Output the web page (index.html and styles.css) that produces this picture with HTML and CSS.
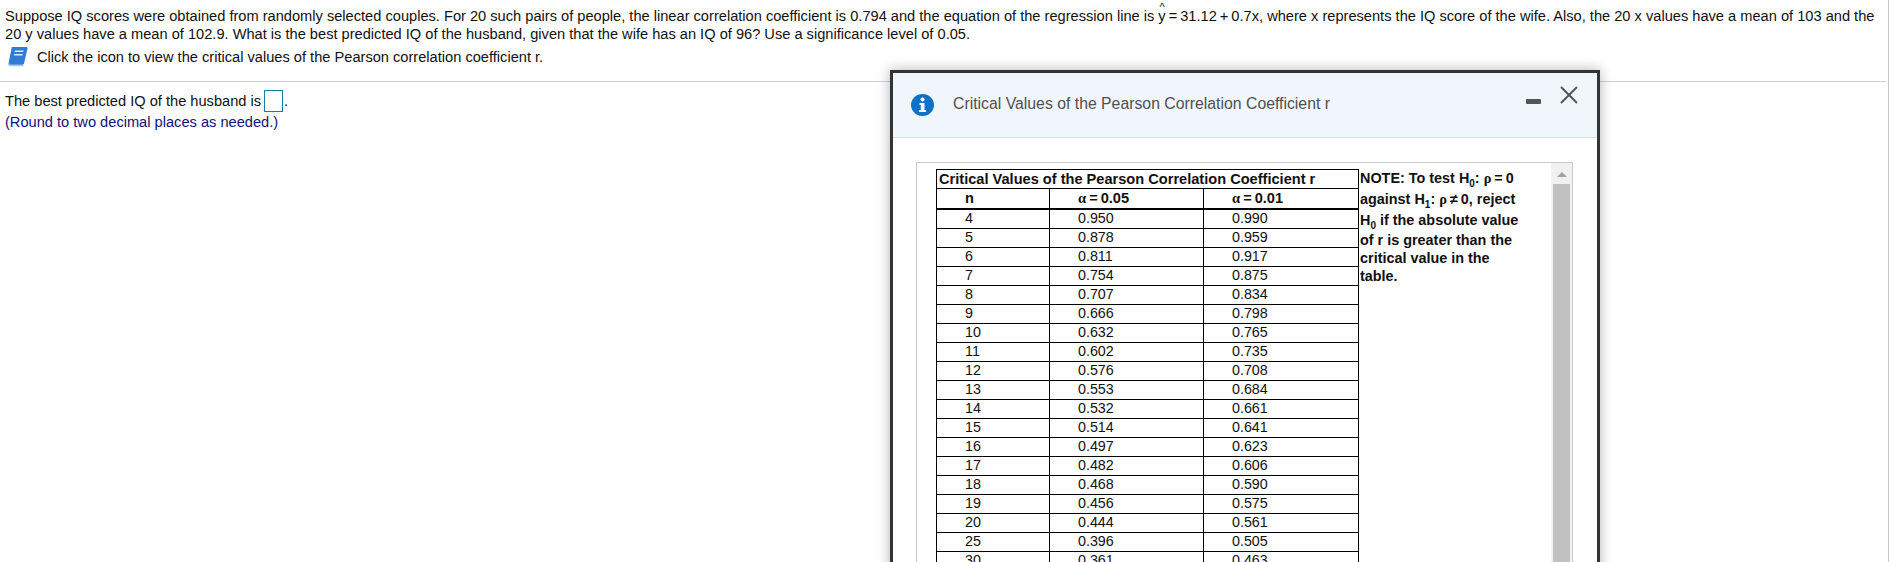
FILE: index.html
```html
<!DOCTYPE html>
<html lang="en">
<head>
<meta charset="utf-8">
<title>Critical Values</title>
<link rel="stylesheet" href="styles.css">
</head>
<body>
<div class="page">
  <section class="question">
    <p class="stem">Suppose IQ scores were obtained from randomly selected couples. For 20 such pairs of people, the linear correlation coefficient is 0.794 and the equation of the regression line is <span class="hat-y"><span class="hat">^</span>y</span><span class="op">=</span>31.12<span class="op">+</span>0.7x, where x represents the IQ score of the wife. Also, the 20 x values have a mean of 103 and the<br>20 y values have a mean of 102.9. What is the best predicted IQ of the husband, given that the wife has an IQ of 96? Use a significance level of 0.05.</p>
    <div class="hint">
      <svg class="book" viewBox="0 0 21 21" width="21" height="21" aria-hidden="true">
        <path d="M5 1h14.500c.8 0 1.200.6 1 1.400L17 17.500c-.2.7-.8 1.200-1.500 1.200H3.200c-1.300 0-1.800-1-1.500-2.200L4.600 2C4.700 1.400 4.700 1 5 1z" fill="#2f7bd6"/>
        <path d="M1 17.300c0 1.800 1 3 2.800 3h11.700c.7 0 1.200-.4 1.400-1H4c-1 0-1.600-.5-1.600-1.300 0-.8.5-1.300 1.400-1.300H2.200z" fill="#8fbbea"/>
        <path d="M8 4.600h8.600l-.4 1.500H7.600zM7.200 8h8.600l-.4 1.500H6.800z" fill="#dbe9f8"/>
      </svg>
      <span>Click the icon to view the critical values of the Pearson correlation coefficient r.</span>
    </div>
  </section>
  <section class="answer">
    <p class="answer-line">The best predicted IQ of the husband is<span class="answer-box"></span>.</p>
    <p class="round-note">(Round to two decimal places as needed.)</p>
  </section>
</div>

<div class="dialog">
  <header class="dialog-head">
    <svg class="info" viewBox="0 0 23 22" width="23" height="22" aria-hidden="true">
      <ellipse cx="11.500" cy="11" rx="11.500" ry="11" fill="#0b72c8"/>
      <circle cx="11.500" cy="5.500" r="2" fill="#fff"/>
      <path d="M8.500 9h5v7h1.500v2H8v-2h1.800v-5H8.500z" fill="#fff"/>
    </svg>
    <h2 class="dialog-title">Critical Values of the Pearson Correlation Coefficient r</h2>
    <div class="controls">
      <svg class="minimize" viewBox="0 0 15 5" width="15" height="5" aria-hidden="true"><rect width="15" height="5" rx="1" fill="#555"/></svg>
      <svg class="close" viewBox="0 0 18 18" width="18" height="18" aria-hidden="true"><path d="M1 1l16 16M17 1L1 17" stroke="#555" stroke-width="2" fill="none"/></svg>
    </div>
  </header>
  <div class="dialog-body">
    <div class="scroll-box">
      <div class="scroll-content">
        <table class="critical">
          <colgroup><col class="c1"><col class="c2"><col class="c3"></colgroup>
          <thead>
            <tr class="title-row"><th colspan="3">Critical Values of the Pearson Correlation Coefficient r</th></tr>
            <tr class="head-row"><th>n</th><th><span class="greek">α</span><span class="op">=</span>0.05</th><th><span class="greek">α</span><span class="op">=</span>0.01</th></tr>
          </thead>
          <tbody>
            <tr><td>4</td><td>0.950</td><td>0.990</td></tr>
            <tr><td>5</td><td>0.878</td><td>0.959</td></tr>
            <tr><td>6</td><td>0.811</td><td>0.917</td></tr>
            <tr><td>7</td><td>0.754</td><td>0.875</td></tr>
            <tr><td>8</td><td>0.707</td><td>0.834</td></tr>
            <tr><td>9</td><td>0.666</td><td>0.798</td></tr>
            <tr><td>10</td><td>0.632</td><td>0.765</td></tr>
            <tr><td>11</td><td>0.602</td><td>0.735</td></tr>
            <tr><td>12</td><td>0.576</td><td>0.708</td></tr>
            <tr><td>13</td><td>0.553</td><td>0.684</td></tr>
            <tr><td>14</td><td>0.532</td><td>0.661</td></tr>
            <tr><td>15</td><td>0.514</td><td>0.641</td></tr>
            <tr><td>16</td><td>0.497</td><td>0.623</td></tr>
            <tr><td>17</td><td>0.482</td><td>0.606</td></tr>
            <tr><td>18</td><td>0.468</td><td>0.590</td></tr>
            <tr><td>19</td><td>0.456</td><td>0.575</td></tr>
            <tr><td>20</td><td>0.444</td><td>0.561</td></tr>
            <tr><td>25</td><td>0.396</td><td>0.505</td></tr>
            <tr><td>30</td><td>0.361</td><td>0.463</td></tr>
          </tbody>
        </table>
        <div class="note">
          <div class="note-line tall">NOTE: To test H<sub>0</sub>: <span class="greek">ρ</span><span class="op">=</span>0</div>
          <div class="note-line tall">against H<sub>1</sub>: <span class="greek">ρ</span><span class="op">≠</span>0, reject</div>
          <div class="note-line tall">H<sub>0</sub> if the absolute value</div>
          <div class="note-line">of r is greater than the</div>
          <div class="note-line">critical value in the</div>
          <div class="note-line">table.</div>
        </div>
      </div>
      <div class="scrollbar">
        <div class="arrow-zone"><span class="arrow"></span></div>
        <div class="thumb"></div>
      </div>
    </div>
  </div>
</div>
</body>
</html>
```
FILE: styles.css
```css
* {
  box-sizing: border-box;
}

html,
body {
  margin: 0;
  height: 562px;
  overflow: hidden;
  background: #fff;
}

body {
  position: relative;
  font-family: "Liberation Sans", Arial, sans-serif;
  font-size: 14.63px;
  color: #111;
}

.page {
  height: 562px;
  padding-right: 2px;
  border-right: 1px solid #c8c8c8;
}

.question {
  height: 82px;
  padding: 7px 0 0 5px;
  border-bottom: 1px solid #d0d0da;
}

.stem {
  margin: 0;
  line-height: 18px;
}

.hat-y {
  position: relative;
  display: inline-block;
}

.hat {
  position: absolute;
  left: 0;
  right: 0;
  top: -7px;
  text-align: center;
  font-size: 11px;
  line-height: 14px;
}

.op {
  margin: 0 3px;
}

.hint {
  display: flex;
  align-items: center;
  gap: 9px;
  margin: 3px 0 0 2px;
  height: 21px;
}

.book {
  flex: none;
}

.answer {
  padding: 8px 0 0 5px;
}

.answer-line {
  margin: 0;
  display: flex;
  align-items: center;
  height: 22px;
}

.answer-box {
  width: 19px;
  height: 22px;
  margin: 0 1px 0 3px;
  border: 1px solid #1b7ca3;
  background: #fff;
}

.round-note {
  margin: 1px 0 0;
  line-height: 18px;
  color: #11117a;
}

.dialog {
  position: absolute;
  left: 890px;
  top: 70px;
  width: 710px;
  height: 510px;
  background: #fff;
  border: 3px solid #333;
  box-shadow: 0 0 12px rgba(0, 0, 0, 0.3);
}

.dialog-head {
  display: flex;
  align-items: center;
  height: 65px;
  padding: 0 19px 0 18px;
  background: #f1f6fd;
  border-bottom: 1px solid #d4e2ee;
}

.info {
  flex: none;
}

.dialog-title {
  margin: -3px 0 0 19px;
  font-size: 15.8px;
  font-weight: 400;
  color: #505050;
}

.controls {
  display: flex;
  align-items: flex-start;
  gap: 19px;
  margin: -21px 0 0 auto;
}

.minimize {
  margin-top: 13px;
}

.dialog-body {
  padding: 24px 24px 0 23px;
}

.scroll-box {
  display: flex;
  height: 420px;
  border: 1px solid #c8c8c8;
}

.scroll-content {
  flex: 1;
  display: flex;
  align-items: flex-start;
  padding: 6px 0 0 19px;
}

.critical {
  width: 422px;
  flex: none;
  table-layout: fixed;
  border-collapse: collapse;
  font-size: 14.3px;
  line-height: 16px;
}

.c1 {
  width: 113px;
}

.c2 {
  width: 154px;
}

.c3 {
  width: 155px;
}

.critical th,
.critical td {
  height: 19px;
  padding: 0 0 2px 28px;
  border: 1px solid #000;
  text-align: left;
  font-weight: 400;
  white-space: nowrap;
  overflow: hidden;
}

.critical th {
  padding-bottom: 0;
  font-size: 14.6px;
  font-weight: 700;
}

.title-row th {
  padding-left: 2px;
}

.head-row th {
  height: 20px;
  border-bottom-width: 2px;
}

.greek {
  font-family: "Liberation Serif", "DejaVu Serif", serif;
  font-weight: 700;
}

.note {
  padding-left: 1px;
  margin-top: -1px;
  font-size: 14.4px;
  font-weight: 700;
  white-space: nowrap;
}

.note-line {
  line-height: 18px;
}

.note-line.tall {
  line-height: 21px;
}

.note sub {
  font-size: 10px;
  line-height: 0;
}

.scrollbar {
  flex: none;
  width: 21px;
  padding: 0 2px;
  background: #f1f1f1;
  display: flex;
  flex-direction: column;
}

.arrow-zone {
  flex: none;
  height: 21px;
  display: flex;
  justify-content: center;
  padding-top: 9px;
}

.arrow {
  width: 0;
  height: 0;
  border-left: 5px solid transparent;
  border-right: 5px solid transparent;
  border-bottom: 5px solid #a3a3a3;
}

.thumb {
  flex: 1;
  background: #c1c1c1;
}
```
